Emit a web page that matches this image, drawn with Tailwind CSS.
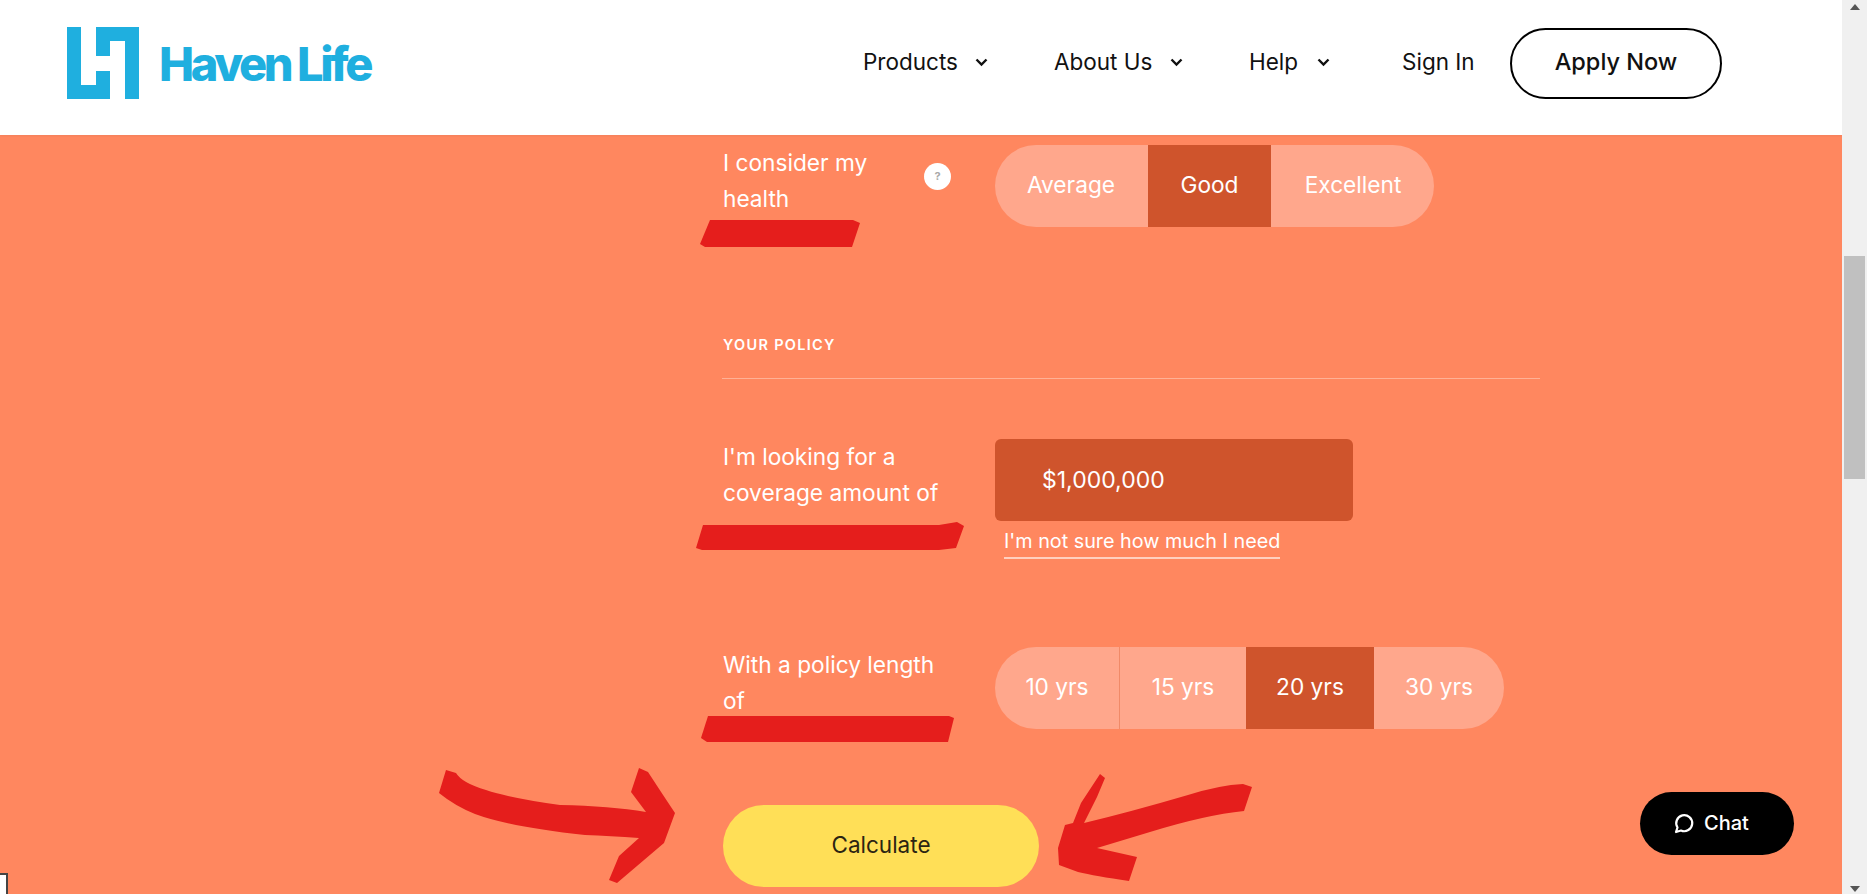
<!DOCTYPE html>
<html lang="en">
<head>
    <meta charset="UTF-8">
    <meta name="viewport" content="width=device-width, initial-scale=1.0">
    <title>Haven Life</title>
    <script src="https://cdn.jsdelivr.net/npm/@tailwindcss/browser@4"></script>
</head>
<body class="relative flex h-[894px] overflow-hidden bg-[#ff875f] font-['Inter',sans-serif] text-white">

    <div class="flex w-[1842px] flex-col">
        <!-- Header -->
        <header class="flex h-[135px] shrink-0 items-center bg-white pr-[120px] pb-[9px] pl-[67px] text-[#111] shadow-xs">
            <svg class="shrink-0" width="72" height="72" viewBox="0 0 72 72" fill="#1fafdf">
                <path d="M0 0h14v58h15V44h14v28H0z"/>
                <path d="M29 0h43v72H58V14H43v15H29z"/>
            </svg>
            <span class="ml-[20px] text-[47px] leading-none font-extrabold tracking-[-3.4px] text-[#1fafdf]">Haven Life</span>

            <nav class="ml-auto flex items-center text-[22.5px]">
                <a class="flex w-[191px] items-center pb-[2px]">Products
                    <svg class="ml-[17px]" width="13" height="9" viewBox="0 0 13 9" fill="none" stroke="#111" stroke-width="2.4"><path d="M1.5 1.5l5 5 5-5"/></svg>
                </a>
                <a class="flex w-[195px] items-center pb-[2px]">About Us
                    <svg class="ml-[18px]" width="13" height="9" viewBox="0 0 13 9" fill="none" stroke="#111" stroke-width="2.4"><path d="M1.5 1.5l5 5 5-5"/></svg>
                </a>
                <a class="flex w-[153px] items-center pb-[2px]">Help
                    <svg class="ml-[19px]" width="13" height="9" viewBox="0 0 13 9" fill="none" stroke="#111" stroke-width="2.4"><path d="M1.5 1.5l5 5 5-5"/></svg>
                </a>
                <a class="w-[108px] pb-[2px]">Sign In</a>
                <a class="flex h-[71px] w-[212px] items-center justify-center rounded-[36px] border-2 border-black pb-[2px] text-[23.5px] font-medium">Apply Now</a>
            </nav>
        </header>

        <!-- Form -->
        <main class="pt-[10px] pl-[722px] text-[22.7px] leading-[36px]">
            <div class="flex h-[82px]">
                <div class="flex w-[273px] pl-px">
                    <p class="w-[201px]">I consider my<br>health</p>
                    <span class="mt-[18px] flex h-[27px] w-[27px] items-center justify-center rounded-full bg-white text-[11px] leading-none font-bold text-[#a9a9a9]">?</span>
                </div>
                <div class="flex h-[82px] w-[439px] items-center overflow-hidden rounded-[41px] bg-[#ffa78c] text-center">
                    <span class="w-[152px] pb-[2px]">Average</span>
                    <span class="mx-px flex h-full w-[123px] items-center justify-center bg-[#cf542c] pb-[2px]">Good</span>
                    <span class="flex-1 pb-[2px]">Excellent</span>
                </div>
            </div>

            <h3 class="mt-[107px] pl-px text-[14.5px] leading-[22px] font-semibold tracking-[1.3px] uppercase">Your policy</h3>
            <div class="mt-[22px] h-px w-[818px] bg-white/35"></div>

            <div class="mt-[60px] flex h-[208px]">
                <p class="w-[273px] pl-px">I'm looking for a<br>coverage amount of</p>
                <div>
                    <div class="flex h-[82px] w-[358px] items-center rounded-md bg-[#cf542c] pl-[47px] text-[23px]">$1,000,000</div>
                    <a class="mt-[5px] ml-[9px] block w-[276px] border-b-2 border-white/60 pb-px text-[19.8px] leading-[30px] whitespace-nowrap">I'm not sure how much I need</a>
                </div>
            </div>

            <div class="flex h-[82px]">
                <p class="w-[273px] pl-px">With a policy length<br>of</p>
                <div class="flex h-[82px] w-[509px] items-center overflow-hidden rounded-[41px] bg-[#ffa78c] text-center">
                    <span class="flex h-full w-[125px] items-center justify-center border-r border-[#f08a68] pb-[2px]">10 yrs</span>
                    <span class="w-[126px] pb-[2px]">15 yrs</span>
                    <span class="flex h-full w-[128px] items-center justify-center bg-[#cf542c] pb-[2px]">20 yrs</span>
                    <span class="flex-1 pb-[2px]">30 yrs</span>
                </div>
            </div>

            <button class="mt-[76px] ml-px h-[82px] w-[316px] rounded-[41px] bg-[#ffdf57] pb-[2px] text-[22.5px] text-[#2b2412]">Calculate</button>
        </main>
    </div>

    <!-- Scrollbar -->
    <aside class="relative w-[25px] shrink-0 bg-[#f0f0f0]">
        <div class="absolute top-[4px] left-[8px] h-0 w-0 border-x-[5px] border-b-[6px] border-x-transparent border-b-[#555]"></div>
        <div class="absolute top-[256px] left-[2px] h-[223px] w-[21px] bg-[#c0c0c0]"></div>
        <div class="absolute bottom-[2px] left-[8px] h-0 w-0 border-x-[5px] border-t-[6px] border-x-transparent border-t-[#555]"></div>
    </aside>

    <!-- Red marker annotations drawn over the screenshot -->
    <svg class="pointer-events-none absolute inset-0" width="1867" height="894" viewBox="0 0 1867 894" fill="#e51e1c">
        <path d="M700 244L710 220H853L860 223L852 247H705z"/>
        <path d="M696 548L703 525H939L957 522L964 526L956 548L939 550H702z"/>
        <path d="M701 738L708 716H949L954 718L948 742H707z"/>
        <path d="M446 770L456 773Q462 783 486 790Q510 798 560 805Q610 806 646 812L631 792L639 768L648 772Q663 795 675 813L664 843L617 883L609 880L619 856L639 838Q610 836 585 835Q510 827 475 814Q455 806 439 793z"/>
        <path d="M1100 774L1105 778L1097 797L1084 823Q1130 812 1188 795Q1220 785 1243 784L1252 787L1244 811Q1205 815 1150 832L1097 848L1137 857L1129 881Q1095 876 1078 872L1059 865L1058 848L1065 825L1073 823L1081 803z"/>
    </svg>

    <!-- Chat widget -->
    <button class="absolute top-[792px] left-[1640px] flex h-[63px] w-[154px] items-center rounded-[32px] bg-black pb-px pl-[34px] text-[20px] font-medium">
        <svg width="20" height="22" viewBox="0 0 20 22" fill="none" stroke="white" stroke-width="2.2">
            <path d="M3.5 15.5A8 8 0 1 1 7 18.5L2 20z" stroke-linejoin="round"/>
        </svg>
        <span class="ml-[10px]">Chat</span>
    </button>

    <!-- Stray corner of a window at the bottom left -->
    <div class="absolute bottom-0 left-0 h-[21px] w-[8px] border-t-2 border-r-2 border-[#444] bg-white"></div>
</body>
</html>
